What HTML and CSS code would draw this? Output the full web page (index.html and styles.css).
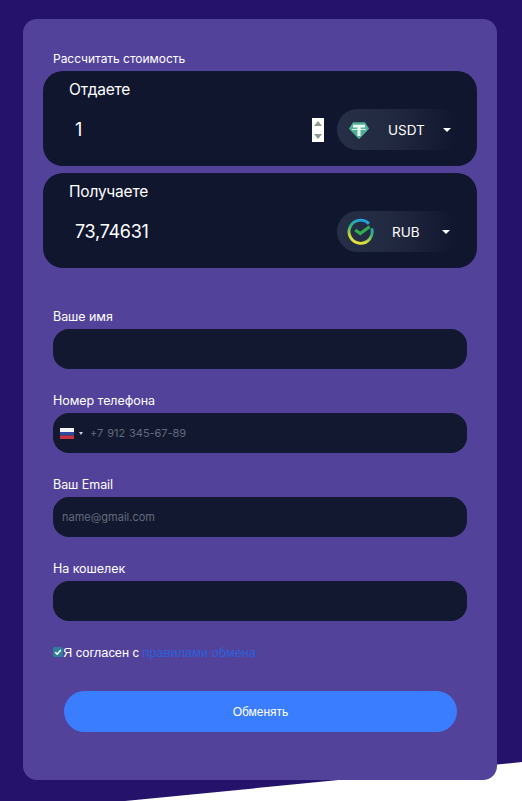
FILE: index.html
```html
<!DOCTYPE html>
<html lang="ru">
<head>
<meta charset="utf-8">
<title>Рассчитать стоимость</title>
<link rel="stylesheet" href="styles.css">
</head>
<body>
<div class="corner"></div>
<main class="card">
  <h2 class="title">Рассчитать стоимость</h2>
  <section class="box">
    <div class="box-label">Отдаете</div>
    <div class="box-row">
      <span class="amount amount-one">1</span>
      <span class="spinner"><i class="up"></i><i class="down"></i></span>
      <div class="pill">
        <svg class="coin" viewBox="0 0 24 24" width="22" height="22">
          <path d="M5.5 3.5h13L23 10.5 12 22 1 10.5z" fill="#50b095"/>
          <path d="M5.5 6.2h13v3h-4.8v9.3h-3.4V9.200H5.500z" fill="#e9f7f2"/>
          <path d="M4.500 11.300c2-.9 13-.9 15 0v1c-2-.8-13-.8-15 0z" fill="#e9f7f2"/>
        </svg>
        <span class="code code-usdt">USDT</span>
        <span class="caret"></span>
      </div>
    </div>
  </section>
  <section class="box">
    <div class="box-label">Получаете</div>
    <div class="box-row">
      <span class="amount">73,74631</span>
      <div class="pill">
        <svg class="sber" viewBox="0 0 28 28" width="27" height="27" fill="none">
          <defs>
            <linearGradient id="ringA" x1="0.7" y1="0" x2="0.3" y2="1">
              <stop offset="0" stop-color="#1f9fe6"/>
              <stop offset="0.45" stop-color="#35b07a"/>
              <stop offset="0.8" stop-color="#c8dc3a"/>
              <stop offset="1" stop-color="#ece23a"/>
            </linearGradient>
          </defs>
          <path d="M22.800 6A12 12 0 1 0 25.600 10.800" stroke="url(#ringA)" stroke-width="3"/>
          <path d="M8.500 12.500l5.200 3.600L23.500 9" stroke="#2fae4e" stroke-width="3.200"/>
        </svg>
        <span class="code code-rub">RUB</span>
        <span class="caret caret-rub"></span>
      </div>
    </div>
  </section>

  <form class="form">
    <div class="group">
      <label class="label">Ваше имя</label>
      <div class="field"></div>
    </div>
    <div class="group">
      <label class="label">Номер телефона</label>
      <div class="field field-phone">
        <svg class="flag" viewBox="0 0 14 11" width="14" height="11">
          <rect width="14" height="4" fill="#f4f4f6"/>
          <rect y="4" width="14" height="3.500" fill="#2b4aa0"/>
          <rect y="7.500" width="14" height="3.500" fill="#c8313e"/>
        </svg>
        <span class="mini-caret"></span>
        <span class="placeholder phone">+7 912 345-67-89</span>
      </div>
    </div>
    <div class="group">
      <label class="label">Ваш Email</label>
      <div class="field field-mail"><span class="placeholder">name@gmail.com</span></div>
    </div>
    <div class="group">
      <label class="label">На кошелек</label>
      <div class="field"></div>
    </div>
    <div class="agree">
      <span class="check"><svg viewBox="0 0 10 10" width="10" height="10" fill="none"><path d="M2.200 5.200l2 1.900 3.600-4" stroke="#fff" stroke-width="1.500"/></svg></span>
      <span>Я согласен с <a class="rules">правилами обмена</a></span>
    </div>
    <button class="submit" type="button">Обменять</button>
  </form>
</main>
</body>
</html>
```
FILE: styles.css
```css
* { box-sizing: border-box; }
html, body { margin: 0; height: 801px; overflow: hidden; }
body {
  position: relative;
  background: #24126b;
  font-family: Inter, Roboto, "Noto Sans", sans-serif;
  color: #fff;
}
.corner {
  position: absolute;
  inset: 0;
  background: #fff;
  clip-path: polygon(522px 762px, 522px 801px, 125px 801px);
}
.card {
  position: relative;
  width: 474px;
  height: 761px;
  margin: 19px 0 0 23px;
  padding: 33px 20px 0;
  background: #53429a;
  border-radius: 14px;
}
.title {
  margin: 0 0 0 10px;
  height: 19px;
  font-size: 12px;
  line-height: 14px;
  font-weight: 400;
  letter-spacing: -0.03px;
}
.box {
  height: 95px;
  margin-bottom: 7px;
  padding: 9px 16px 0 26px;
  background: #11162f;
  border-radius: 20px;
}
.box-label { font-size: 15.500px; line-height: 20px; letter-spacing: -0.2px; }
.box-row {
  display: flex;
  align-items: center;
  height: 41px;
  margin-top: 9px;
}
.amount {
  margin-left: 6px;
  font-size: 18px;
  line-height: 24px;
  letter-spacing: -0.3px;
}
.spinner {
  display: flex;
  flex-direction: column;
  justify-content: space-between;
  align-items: center;
  width: 12px;
  height: 24px;
  margin-left: auto;
  margin-right: 13px;
  padding: 3px 0;
  background: #fff;
}
.spinner i { width: 0; height: 0; border-left: 4px solid transparent; border-right: 4px solid transparent; }
.spinner .up { border-bottom: 5px solid #8d9a8f; }
.spinner .down { border-top: 5px solid #8d9a8f; }
.amount + .pill { margin-left: auto; }
.pill {
  display: flex;
  align-items: center;
  flex: none;
  width: 124px;
  height: 41px;
  padding-left: 11px;
  border-radius: 21px;
  background: linear-gradient(90deg, #262f47 0%, #222a41 40%, #11162f 95%);
}
.sber { margin-left: -1px; }
.code { font-size: 13.500px; line-height: 16px; font-weight: 400; }
.code-usdt { margin-left: 18px; }
.code-rub { margin-left: 18px; }
.caret {
  width: 0;
  height: 0;
  margin-left: auto;
  margin-right: 10px;
  border-left: 4px solid transparent;
  border-right: 4px solid transparent;
  border-top: 4px solid #fff;
}
.caret-rub { margin-right: 11px; }
.form {
  display: flex;
  flex-direction: column;
  padding: 0 10px;
  margin-top: 38px;
}
.group { display: flex; flex-direction: column; margin-bottom: 21px; }
.label { height: 23px; font-size: 12.500px; line-height: 22px; letter-spacing: -0.05px; }
.field {
  display: flex;
  align-items: center;
  height: 40px;
  background: #12182f;
  border-radius: 16px;
}
.field-phone { padding-left: 7px; }
.field-mail { padding-left: 9px; }
.flag { flex: none; }
.mini-caret {
  width: 0;
  height: 0;
  margin: 0 7px 0 5px;
  border-left: 2px solid transparent;
  border-right: 2px solid transparent;
  border-top: 3px solid #ccd;
}
.placeholder { font-size: 11px; color: #646a7d; }
.phone { letter-spacing: -0.05px; word-spacing: 1px; }
.agree {
  display: flex;
  align-items: center;
  height: 16px;
  margin-top: 2px;
  font-family: "Liberation Sans", Arial, sans-serif;
  font-size: 12.800px;
}
.check {
  display: flex;
  flex: none;
  width: 10px;
  height: 10px;
  background: #2f7f97;
  border-radius: 2px;
}
.rules { color: #2a60dc; }
.submit {
  width: 393px;
  height: 41px;
  margin: 31px 0 0 11px;
  padding: 0;
  border: 0;
  border-radius: 21px;
  background: #3b7dff;
  color: #fff;
  font-family: "Liberation Sans", Arial, sans-serif;
  font-size: 12px;
}
```
